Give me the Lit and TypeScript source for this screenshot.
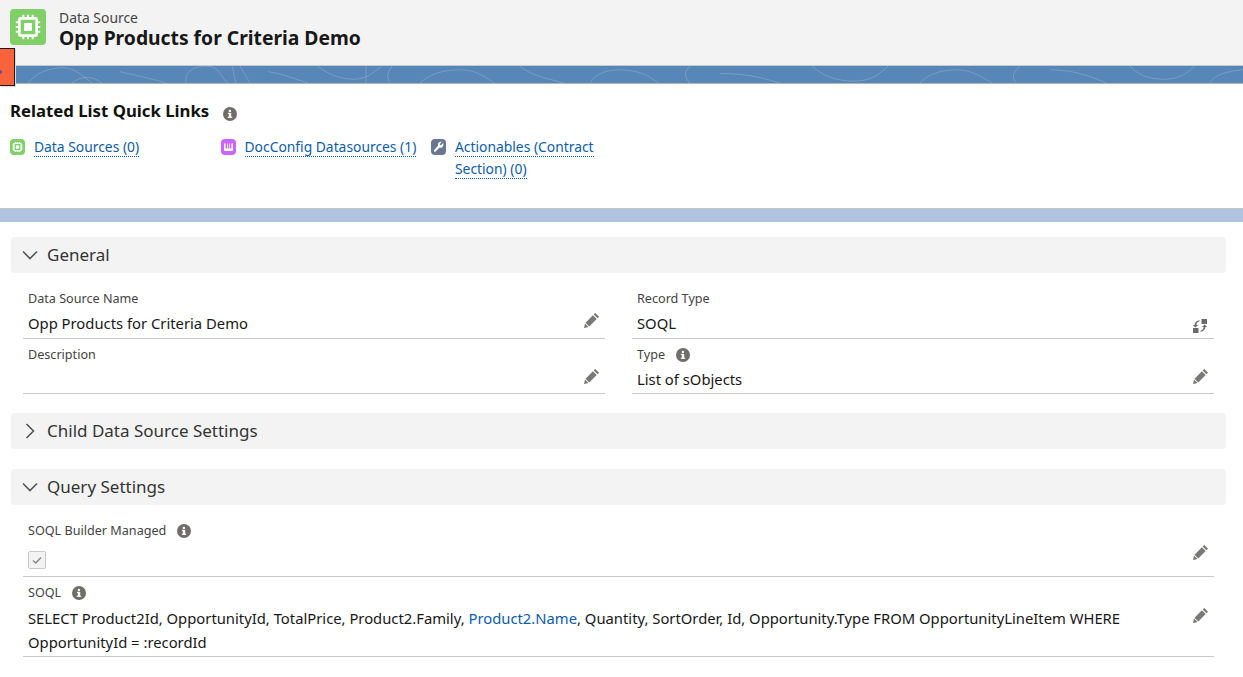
import { LitElement, html, css, svg } from "lit";
import { customElement } from "lit/decorators.js";

const pencil = html`<svg class="edit" viewBox="0 0 16 16"><path d="M11.600 1.200l3.200 3.200c.2.2.2.4 0 .6l-1.300 1.300-3.800-3.800 1.300-1.300c.2-.2.4-.2.6 0zM8.900 3.300l3.800 3.800-7.400 7.400-3.800-3.800zM1 11.500l3.500 3.500-3.900 1c-.3 0-.5-.2-.5-.5z" fill="#7b7977"/></svg>`;
const change = html`<svg class="edit chg" viewBox="0 0 16 16" fill="#6b6b6b"><rect x="9.500" y="1" width="5.500" height="5"/><rect x="1" y="10" width="5.500" height="5"/><path d="M7.500 2.200v1.300C5.600 3.700 4.500 5 4.300 7H6L3.400 9.600.8 7h1.700C2.700 4.300 4.700 2.400 7.500 2.200zM8.500 13.800v-1.300c1.900-.2 3-1.500 3.200-3.500H10l2.600-2.600L15.200 9h-1.700c-.2 2.700-2.200 4.600-5 4.800z"/></svg>`;
const info = html`<svg class="info" viewBox="0 0 14 14"><circle cx="7" cy="7" r="7" fill="#706e6b"/><rect x="5.800" y="6" width="2.400" height="4.300" fill="#fff"/><rect x="4.800" y="9.700" width="4.400" height="1.200" fill="#fff"/><rect x="4.900" y="5.800" width="3" height="1.100" fill="#fff"/><circle cx="6.900" cy="3.900" r="1.200" fill="#fff"/></svg>`;
const chevDown = html`<svg class="chev" viewBox="0 0 16 16"><path d="M1 4.500L8 11.500l7-7" fill="none" stroke="#555" stroke-width="1.600"/></svg>`;
const chevRight = html`<svg class="chev" viewBox="0 0 16 16"><path d="M4.500 1L11.500 8l-7 7" fill="none" stroke="#555" stroke-width="1.600"/></svg>`;

const chip = (s: number, sw: number) => svg`
  <rect x="${s * 0.26}" y="${s * 0.26}" width="${s * 0.48}" height="${s * 0.48}" fill="none" stroke="#fff" stroke-width="${sw}" rx="${s * 0.03}"/>
  <rect x="${s * 0.39}" y="${s * 0.39}" width="${s * 0.22}" height="${s * 0.22}" fill="#fff"/>
  <path d="M${s * 0.37} ${s * 0.16}v${s * 0.08}M${s * 0.5} ${s * 0.16}v${s * 0.08}M${s * 0.63} ${s * 0.16}v${s * 0.08}M${s * 0.37} ${s * 0.76}v${s * 0.08}M${s * 0.5} ${s * 0.76}v${s * 0.08}M${s * 0.63} ${s * 0.76}v${s * 0.08}M${s * 0.16} ${s * 0.37}h${s * 0.08}M${s * 0.16} ${s * 0.5}h${s * 0.08}M${s * 0.16} ${s * 0.63}h${s * 0.08}M${s * 0.76} ${s * 0.37}h${s * 0.08}M${s * 0.76} ${s * 0.5}h${s * 0.08}M${s * 0.76} ${s * 0.63}h${s * 0.08}" stroke="#fff" stroke-width="${sw * 0.75}" fill="none"/>`;

const topo = html`<svg class="topo" viewBox="0 0 1243 18" preserveAspectRatio="none" fill="none" stroke="#fff" stroke-opacity=".2" stroke-width="1">
  <path d="M28 18C36 8 44 4 58 2s22 6 34 16M72 18c10-8 20-8 30 0M120 6c16 4 34 8 46 12M186 18c-2-10 6-18 20-18s14 12 22 18M232 0c2 6 2 12 4 18M240 0l10 18M268 6c14 2 28 8 40 12M318 0c8 8 22 14 36 14s20-8 28-14M366 0v18M392 0c-4 6-6 12-2 18M420 18c10-10 24-14 40-14s26 8 34 14M520 0c10 10 30 14 44 18M590 18c4-8 14-14 30-14s30 6 38 14M690 0c-6 6-6 12 0 18M720 8c30 0 46 6 60 10M812 0c10 10 24 16 42 16s26-8 34-16M920 18c6-8 20-14 36-14s26 8 36 14M1020 0c-8 8-8 12-4 18M1050 4c24 0 44 8 56 14M1130 0c8 10 20 14 34 14s24-6 30-14M1210 18c4-8 14-12 33-14"/>
</svg>`;

@customElement("app-root")
export class AppRoot extends LitElement {
  static styles = css`
    :host { display: block; width: 1243px; height: 677px; overflow: hidden; position: relative; background: #fff; font-family: "Noto Sans", "Open Sans", sans-serif; color: #181818; font-size: 14.800px; }
    .head { height: 66px; box-sizing: border-box; background: #f3f3f3; border-bottom: 1px solid #c9c9c9; display: flex; align-items: flex-start; padding: 9px 10px 0; gap: 13px; }
    .logo { width: 36px; height: 36px; background: #7fd067; border-radius: 4px; flex: none; }
    .logo svg { display: block; width: 36px; height: 36px; }
    .kind { font-size: 13.900px; line-height: 18px; color: #444; }
    .title { font-size: 19.300px; font-weight: 700; line-height: 22px; color: #181818; }
    .banner { height: 18px; background: #5786b8; border-bottom: 1px solid #b5b5b5; box-sizing: border-box; }
    .topo { display: block; width: 100%; height: 17px; }
    .flag { position: absolute; left: 0; top: 48px; width: 14px; height: 36px; background: #f9623a; border: 1px solid #1a1a1a; border-left: 0; box-shadow: 1px 1px 0 #ddd; }
    .flag i { position: absolute; left: -2px; top: 21px; width: 4px; height: 4px; border-radius: 50%; background: #6a4a98; }
    .links { height: 124px; box-sizing: border-box; padding: 16px 10px 0; }
    .links h2 { margin: 0; font-size: 16.750px; line-height: 22px; font-weight: 700; display: flex; align-items: center; gap: 14px; color: #111; }
    .links h2 .info { margin-top: 5px; }
    .list { display: flex; margin-top: 14px; font-size: 13.850px; }
    .ql { width: 210.500px; display: flex; gap: 9px; align-items: flex-start; box-sizing: border-box; padding-right: 10px; }
    .ql.last { width: 180px; }
    .ql a { color: #0b5cab; line-height: 22px; text-decoration: none; }
    .ql a span { border-bottom: 1px dotted #0b5cab; }
    .qi { width: 15px; height: 16px; border-radius: 4px; flex: none; margin-top: 3px; display: block; }
    .qg { background: #7fd067; }
    .qp { background: #cb65ff; }
    .qs { background: #6b7594; }
    .band { height: 14px; background: #b0c4df; border-top: 1px solid #c2c6cc; box-sizing: border-box; }
    main { padding: 15px 17px 0 11px; }
    .sec { height: 36px; background: #f3f3f3; border-radius: 4px; display: flex; align-items: center; gap: 9px; padding-left: 11px; font-size: 17px; color: #333; line-height: 34px; }
    .chev { width: 16px; height: 16px; flex: none; }
    .grid { display: grid; grid-template-columns: 582px 582px; grid-template-rows: 59px 55px; column-gap: 27px; margin: 7px 0 0 12px; width: 1191px; }
    .f { position: relative; border-bottom: 1px solid #c9c9c9; box-sizing: border-box; padding-left: 5px; }
    .lab { font-size: 12.620px; line-height: 18px; color: #444; display: flex; align-items: center; gap: 11px; padding-top: 10px; }
    .r2 .lab { padding-top: 7px; }
    .val { line-height: 22px; margin-top: 4px; color: #181818; }
    .edit { position: absolute; right: 5px; width: 16px; height: 16px; top: 32px; }
    .r2 .edit { top: 29px; }
    .edit.chg { top: 38px; right: 6px; }
    .info { width: 14px; height: 14px; flex: none; display: block; }
    .gap19 { margin-top: 19px; }
    .gap { margin-top: 20px; }
    .qf { position: relative; padding-left: 5px; border-bottom: 1px solid #c9c9c9; box-sizing: border-box; }
    .qf1 { height: 65px; }
    .qf1 .edit { top: 32px; }
    .qf1 .lab { padding-top: 10px; }
    .cb { display: block; width: 16px; height: 16px; margin-top: 11px; border: 1px solid #c9c9c9; border-radius: 2px; background: #f3f3f3; }
    .qf2 { height: 80px; }
    .qf2 .lab { padding-top: 7px; }
    .qf2 .val { margin-top: 4px; line-height: 24px; width: 1160px; }
    .qf2 .edit { top: 30px; }
    .qf2 b { font-weight: 400; color: #0b5cab; }
    .q { margin: 7px 0 0 12px; width: 1191px; }
  `;

  private field(label: string, val: string, icon = pencil, hasInfo = false, r2 = false) {
    return html`<div class="f ${r2 ? "r2" : ""}"><div class="lab">${label}${hasInfo ? info : ""}</div><div class="val">${val}</div>${icon}</div>`;
  }

  render() {
    return html`
      <div class="head">
        <div class="logo"><svg viewBox="0 0 36 36">${chip(36, 2.6)}</svg></div>
        <div><div class="kind">Data Source</div><div class="title">Opp Products for Criteria Demo</div></div>
      </div>
      <div class="banner">${topo}</div>
      <div class="flag"><i></i></div>
      <section class="links">
        <h2>Related List Quick Links ${info}</h2>
        <div class="list">
          <div class="ql"><svg class="qi qg" viewBox="0 0 16 16">${chip(16, 1.5)}</svg><a><span>Data Sources (0)</span></a></div>
          <div class="ql"><svg class="qi qp" viewBox="0 0 16 16"><path d="M3.200 4.200v6.600c0 .8.600 1.400 1.400 1.400h6.800c.8 0 1.400-.6 1.400-1.400V4.200h-1.700v5.500h-1.500V4.200H8.800v5.500H7.200V4.200H6.400v5.500H4.900V4.200z" fill="#fff"/></svg><a><span>DocConfig Datasources (1)</span></a></div>
          <div class="ql last"><svg class="qi qs" viewBox="0 0 16 16"><path d="M13 3.800l-2.300 2.300-1-.3-.4-1 2.300-2.300c-1.500-.4-3.200.1-3.900 1.500-.4.900-.4 1.700-.1 2.500L3.400 11.200c-.5.500-.5 1.200 0 1.600.4.400 1.100.4 1.500 0L9.200 8.500c.8.300 1.700.3 2.500-.1 1.400-.7 1.900-3.100 1.300-4.600z" fill="#fff"/></svg><a><span>Actionables (Contract</span><br><span>Section) (0)</span></a></div>
        </div>
      </section>
      <div class="band"></div>
      <main>
        <div class="sec">${chevDown}<span>General</span></div>
        <div class="grid">
          ${this.field("Data Source Name", "Opp Products for Criteria Demo")}
          ${this.field("Record Type", "SOQL", change)}
          ${this.field("Description", "", pencil, false, true)}
          ${this.field("Type", "List of sObjects", pencil, true, true)}
        </div>
        <div class="sec gap19">${chevRight}<span>Child Data Source Settings</span></div>
        <div class="sec gap">${chevDown}<span>Query Settings</span></div>
        <div class="q">
          <div class="qf qf1"><div class="lab">SOQL Builder Managed ${info}</div>
            <svg class="cb" viewBox="0 0 16 16"><path d="M4 8.500l2.800 2.500L12 5.500" fill="none" stroke="#8a8a8a" stroke-width="1.600"/></svg>${pencil}</div>
          <div class="qf qf2"><div class="lab">SOQL ${info}</div>
            <div class="val">SELECT Product2Id, OpportunityId, TotalPrice, Product2.Family, <b>Product2.Name</b>, Quantity, SortOrder, Id, Opportunity.Type FROM OpportunityLineItem WHERE OpportunityId = :recordId</div>${pencil}</div>
        </div>
      </main>`;
  }
}
